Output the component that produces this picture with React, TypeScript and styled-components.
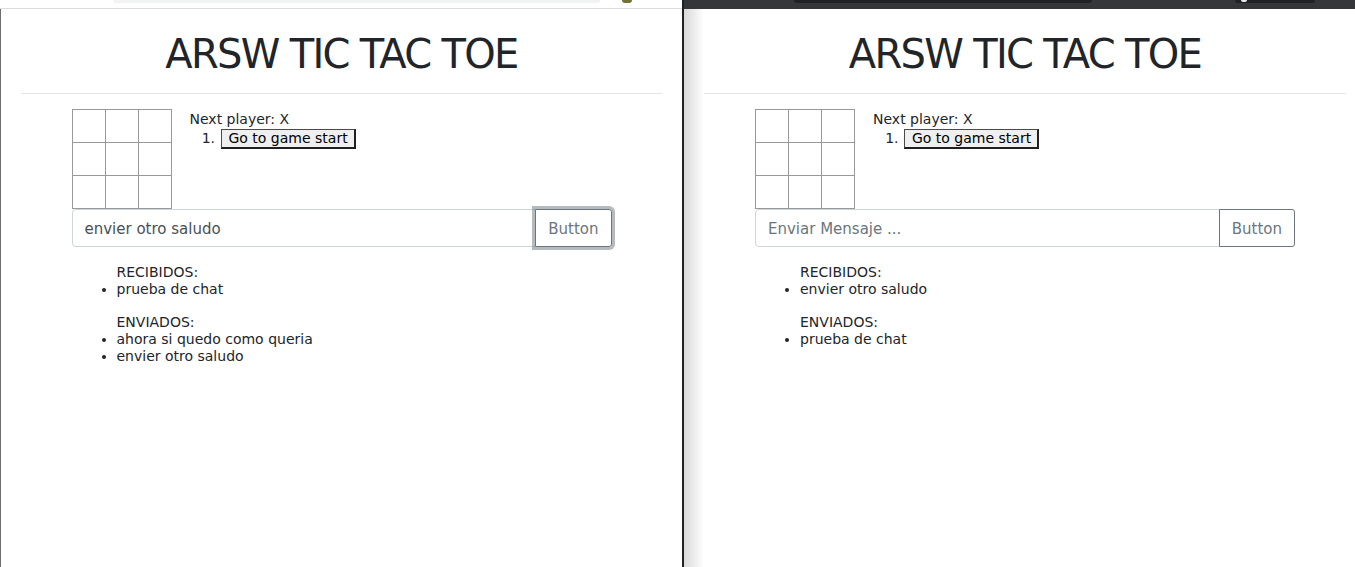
import React from "react";
import styled, { createGlobalStyle, css } from "styled-components";

const GlobalStyle = createGlobalStyle`
  html, body {
    margin: 0;
    padding: 0;
    overflow: hidden;
    background: #202124;
  }
  * { box-sizing: border-box; }
`;

const Desktop = styled.div`
  display: flex;
  width: 1355px;
  height: 567px;
  overflow: hidden;
  background: #202124;
`;

const Separator = styled.div`
  flex: 0 0 2px;
  background: #202124;
`;

const BrowserWindow = styled.div`
  flex: 0 0 682px;
  width: 682px;
  height: 567px;
  display: flex;
  flex-direction: column;
`;

const Chrome = styled.div<{ $dark?: boolean }>`
  flex: 0 0 9px;
  display: flex;
  align-items: flex-start;
  background: ${(p) => (p.$dark ? "#35363a" : "#ffffff")};
  border-bottom: 1px solid ${(p) => (p.$dark ? "#35363a" : "#dadce0")};
`;

const Pill = styled.div<{ $left: number; $width: number; $color: string }>`
  margin-left: ${(p) => p.$left}px;
  width: ${(p) => p.$width}px;
  height: 3px;
  background: ${(p) => p.$color};
  border-radius: 0 0 6px 6px;
  display: flex;
  align-items: flex-start;
`;

const PillDot = styled.span`
  margin-left: 6px;
  width: 6px;
  height: 2px;
  background: #e8eaed;
  border-radius: 0 0 3px 3px;
`;

const Page = styled.div<{ $edge?: boolean; $shadow?: boolean }>`
  position: relative;
  flex: 1;
  background: #ffffff;
  padding: 20px;
  font-family: "DejaVu Sans", "Liberation Sans", sans-serif;
  font-size: 14px;
  line-height: 17px;
  color: #212529;
  ${(p) =>
    p.$edge &&
    css`
      border-left: 1px solid #6e6e6e;
    `}
  ${(p) =>
    p.$shadow &&
    css`
      &::before {
        content: "";
        position: absolute;
        left: 0;
        top: 0;
        bottom: 0;
        width: 20px;
        background: linear-gradient(to right, #d9d9d9, rgba(255, 255, 255, 0));
        pointer-events: none;
      }
    `}
`;

const Title = styled.h1`
  margin: 0 0 8px;
  padding-top: 1px;
  height: 48px;
  font-family: "DejaVu Sans", "Liberation Sans", sans-serif;
  font-size: 40px;
  line-height: 48px;
  font-weight: 400;
  letter-spacing: -1.7px;
  text-align: center;
  color: #212529;
`;

const Rule = styled.hr`
  margin: 16px 0;
  border: 0;
  border-top: 1px solid rgba(0, 0, 0, 0.1);
`;

const Container = styled.div`
  max-width: 540px;
  margin: 0 auto;
`;

const Game = styled.div`
  display: flex;
  flex-direction: row;
`;

const Board = styled.div`
  display: grid;
  grid-template-columns: repeat(3, 33px);
  grid-template-rows: repeat(3, 33px);
  margin-top: -1px;
  border-left: 1px solid #999;
  border-top: 1px solid #999;
  width: 100px;
  height: 100px;
`;

const Square = styled.button`
  background: #fff;
  border: 0;
  border-right: 1px solid #999;
  border-bottom: 1px solid #999;
  padding: 0;
  margin: 0;
  font-size: 24px;
  font-weight: bold;
`;

const GameInfo = styled.div`
  margin-left: 18px;
  padding-top: 1px;
`;

const Status = styled.div``;

const MoveList = styled.ol`
  margin: 0;
  padding-left: 30px;
`;

const JumpButton = styled.button`
  font-family: "DejaVu Sans", "Liberation Sans", sans-serif;
  font-size: 14px;
  line-height: 15px;
  color: #000;
  background: #efefef;
  padding: 1px 6px 1px 7px;
  margin: 1px 0 0 1px;
  border-style: solid;
  border-width: 1px 2px 2px 1px;
  border-color: #4a4a4a #1f1f1f #1f1f1f #4a4a4a;
  border-radius: 0;
`;

const InputGroup = styled.div`
  display: flex;
  width: 100%;
`;

const MessageInput = styled.input`
  flex: 1;
  min-width: 0;
  height: 38px;
  padding: 7px 12px 5px;
  font-family: "DejaVu Sans", "Liberation Sans", sans-serif;
  font-size: 15px;
  color: #495057;
  background: #fff;
  border: 1px solid #ced4da;
  border-radius: 4px 0 0 4px;
  outline: none;
  &::placeholder {
    color: #6c757d;
  }
`;

const SendButton = styled.button<{ $focused?: boolean }>`
  flex: 0 0 auto;
  height: 38px;
  margin-left: -1px;
  padding: 7px 12px 5px;
  font-family: "DejaVu Sans", "Liberation Sans", sans-serif;
  font-size: 15px;
  line-height: 24px;
  color: #6c757d;
  background: transparent;
  border: 1px solid #6c757d;
  border-radius: 0 3px 3px 0;
  ${(p) =>
    p.$focused &&
    css`
      box-shadow: 0 0 0 3px rgba(108, 117, 125, 0.5);
    `}
`;

const Chat = styled.div`
  margin-top: 17px;
`;

const MessageList = styled.ul`
  margin: 0 0 16px;
  padding-left: 45px;
`;

const ListLabel = styled.div``;

const Message = styled.li``;

type PanelProps = {
  input: string;
  placeholder?: string;
  focused?: boolean;
  received: string[];
  sent: string[];
};

function TicTacToePage({ input, placeholder, focused, received, sent }: PanelProps) {
  return (
    <>
      <Title>ARSW TIC TAC TOE</Title>
      <Rule />
      <Container>
        <Game>
          <Board>
            {Array.from({ length: 9 }).map((_, i) => (
              <Square key={i} />
            ))}
          </Board>
          <GameInfo>
            <Status>Next player: X</Status>
            <MoveList>
              <li>
                <JumpButton>Go to game start</JumpButton>
              </li>
            </MoveList>
          </GameInfo>
        </Game>
        <InputGroup>
          <MessageInput defaultValue={input} placeholder={placeholder} />
          <SendButton $focused={focused}>Button</SendButton>
        </InputGroup>
        <Chat>
          <MessageList>
            <ListLabel>RECIBIDOS:</ListLabel>
            {received.map((m) => (
              <Message key={m}>{m}</Message>
            ))}
          </MessageList>
          <MessageList>
            <ListLabel>ENVIADOS:</ListLabel>
            {sent.map((m) => (
              <Message key={m}>{m}</Message>
            ))}
          </MessageList>
        </Chat>
      </Container>
    </>
  );
}

export default function App() {
  return (
    <>
      <GlobalStyle />
      <Desktop>
        <BrowserWindow>
          <Chrome>
            <Pill $left={113} $width={487} $color="#f1f3f4" />
            <Pill $left={22} $width={10} $color="#6f7436" />
          </Chrome>
          <Page $edge>
            <TicTacToePage
              input="envier otro saludo"
              focused
              received={["prueba de chat"]}
              sent={["ahora si quedo como queria", "envier otro saludo"]}
            />
          </Page>
        </BrowserWindow>
        <Separator />
        <BrowserWindow>
          <Chrome $dark>
            <Pill $left={110} $width={298} $color="#202124" />
            <Pill $left={143} $width={80} $color="#202124">
              <PillDot />
            </Pill>
          </Chrome>
          <Page $shadow>
            <TicTacToePage
              input=""
              placeholder="Enviar Mensaje ..."
              received={["envier otro saludo"]}
              sent={["prueba de chat"]}
            />
          </Page>
        </BrowserWindow>
      </Desktop>
    </>
  );
}
